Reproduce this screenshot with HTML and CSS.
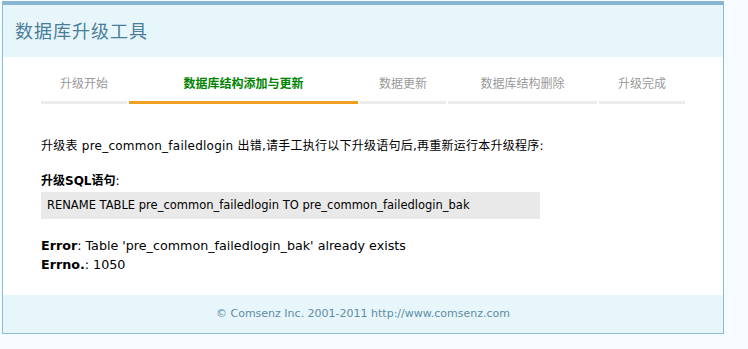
FILE: index.html
```html
<!DOCTYPE html>
<html>
<head>
<meta charset="utf-8">
<title>数据库升级工具</title>
<link rel="stylesheet" href="styles.css">
</head>
<body>
<div class="container">
  <div class="header"><h1 class="title">数据库升级工具</h1></div>
  <div class="main">
    <ul class="steps">
      <li class="step s1">升级开始</li>
      <li class="step s2 current">数据库结构添加与更新</li>
      <li class="step s3">数据更新</li>
      <li class="step s4">数据库结构删除</li>
      <li class="step s5">升级完成</li>
    </ul>
    <p class="msg">升级表 pre_common_failedlogin 出错,请手工执行以下升级语句后,再重新运行本升级程序:</p>
    <p class="label"><b>升级SQL语句</b>:</p>
    <div class="sql">RENAME TABLE pre_common_failedlogin TO pre_common_failedlogin_bak</div>
    <div class="err">
      <div><b>Error</b>: Table 'pre_common_failedlogin_bak' already exists</div>
      <div><b>Errno.</b>: 1050</div>
    </div>
  </div>
  <div class="footer">© Comsenz Inc. 2001-2011 http://www.comsenz.com</div>
</div>
</body>
</html>
```
FILE: styles.css
```css
html, body {
  background: #f5fbff;
}
body {
  margin: 1px 0 0 2px;
  font-family: "DejaVu Sans", "Noto Sans CJK SC", sans-serif;
  font-size: 12px;
  color: #000;
}
.container {
  box-sizing: border-box;
  width: 722px;
  border: 1px solid #8cbcd4;
  border-top: 4px solid #86b6d2;
  background: #fff;
}
.header {
  height: 52px;
  background: #e7f6fb;
  display: flex;
  align-items: center;
  padding-left: 12px;
}
.title {
  margin: 0;
  font-family: "Noto Sans CJK SC", sans-serif;
  font-size: 18px;
  font-weight: normal;
  letter-spacing: 1px;
  color: #4a7d9a;
  line-height: 22px;
  position: relative;
  top: -1px;
}
.main {
  padding: 15px 38px 0;
  height: 223px;
}
.steps {
  list-style: none;
  margin: 0;
  padding: 0;
  display: flex;
  gap: 2px;
}
.step {
  box-sizing: border-box;
  height: 32px;
  line-height: 22px;
  text-align: center;
  color: #999;
  font-family: "Noto Sans CJK SC", sans-serif;
  font-size: 12px;
  border-bottom: 3px solid #ececec;
}
.s1 { width: 86px; }
.s2 { width: 229px; }
.s3 { width: 86px; }
.s4 { width: 149px; }
.s5 { width: 86px; }
.step.current {
  color: #008400;
  font-weight: bold;
  border-bottom-color: #f0a020;
}
.msg {
  margin: 33px 0 0;
  line-height: 18px;
  letter-spacing: 0.24px;
}
.label {
  margin: 17px 0 0;
  line-height: 18px;
}
.sql {
  width: 499px;
  height: 27px;
  box-sizing: border-box;
  background: #e9e9e9;
  line-height: 27px;
  padding-left: 6px;
  margin-top: 2px;
  font-size: 11.5px;
}
.err {
  margin-top: 17px;
  line-height: 19px;
  font-size: 12.7px;
}
.footer {
  height: 38px;
  background: #e7f6fb;
  text-align: center;
  line-height: 38px;
  font-size: 11px;
  color: #5f8ca3;
}
```
